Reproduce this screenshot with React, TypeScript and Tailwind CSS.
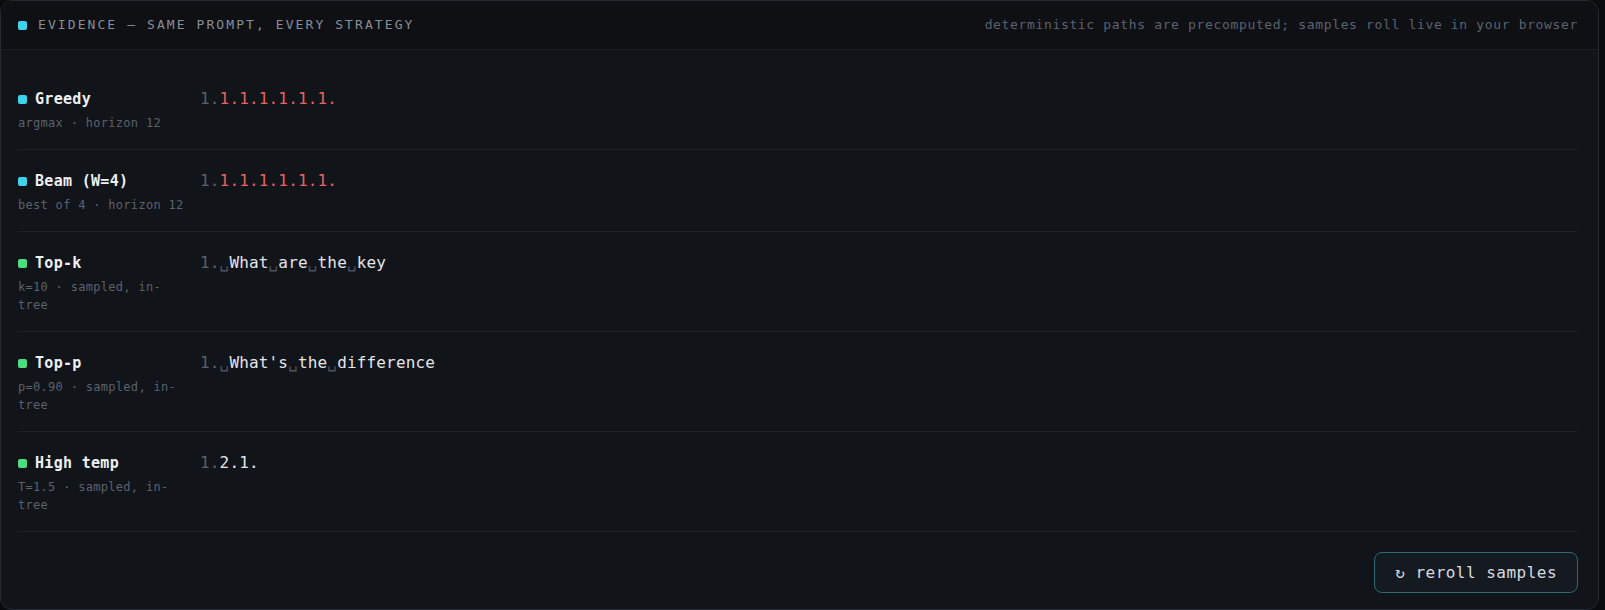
import React from "react";

type Seg = { text: string; tone: "red" | "text" | "space" };

type Row = {
  name: string;
  meta: string;
  dot: string;
  out: Seg[];
};

const sp: Seg = { text: "␣", tone: "space" };
const w = (text: string): Seg => ({ text, tone: "text" });

const rows: Row[] = [
  {
    name: "Greedy",
    meta: "argmax · horizon 12",
    dot: "bg-[#3fd2ec]",
    out: [{ text: "1.1.1.1.1.1.", tone: "red" }],
  },
  {
    name: "Beam (W=4)",
    meta: "best of 4 · horizon 12",
    dot: "bg-[#3fd2ec]",
    out: [{ text: "1.1.1.1.1.1.", tone: "red" }],
  },
  {
    name: "Top-k",
    meta: "k=10 · sampled, in-tree",
    dot: "bg-[#4ade80]",
    out: [sp, w("What"), sp, w("are"), sp, w("the"), sp, w("key")],
  },
  {
    name: "Top-p",
    meta: "p=0.90 · sampled, in-tree",
    dot: "bg-[#4ade80]",
    out: [sp, w("What's"), sp, w("the"), sp, w("difference")],
  },
  {
    name: "High temp",
    meta: "T=1.5 · sampled, in-tree",
    dot: "bg-[#4ade80]",
    out: [w("2.1.")],
  },
];

const toneClass = {
  red: "text-[#e8625e]",
  text: "text-[#e4e6ea]",
  space: "text-[#4d535d]",
};

function StrategyRow({ row }: { row: Row }) {
  return (
    <div className="flex items-start gap-3 border-b border-[#1d2026] pt-5 pb-[17px]">
      <div className="w-[170px] shrink-0">
        <div className="flex h-[22px] items-center gap-2">
          <span className={`h-[9px] w-[9px] rounded-[2px] ${row.dot}`} />
          <span className="text-[15px] leading-[22px] font-bold tracking-[0.02em] text-[#eef0f3]">
            {row.name}
          </span>
        </div>
        <p className="mt-1 text-[12px] leading-[18px] tracking-[0.025em] text-[#5b616c]">{row.meta}</p>
      </div>
      <div className="text-[16px] leading-[22px] tracking-[0.01em] whitespace-pre">
        <span className="text-[#59616c]">1.</span>
        {row.out.map((s, i) => (
          <span key={i} className={toneClass[s.tone]}>
            {s.text}
          </span>
        ))}
      </div>
    </div>
  );
}

export default function App() {
  return (
    <div
      className="min-h-screen bg-[#0a0b0d]"
      style={{ fontFamily: '"DejaVu Sans Mono", "Liberation Mono", monospace' }}
    >
      <div className="h-[610px] w-[1599px] overflow-hidden rounded-xl border border-[#252930] bg-[#111419]">
        <header className="flex h-[49px] items-center justify-between border-b border-[#1b1e24] bg-[#0e1014] pl-[17px] pr-5">
          <div className="flex items-center gap-[11px]">
            <span className="h-[9px] w-[9px] rounded-[2px] bg-[#3fd2ec]" />
            <span className="text-[13px] tracking-[0.16em] text-[#878e99]">
              EVIDENCE — SAME PROMPT, EVERY STRATEGY
            </span>
          </div>
          <span className="text-[13px] tracking-[0.05em] text-[#5c636e]">
            deterministic paths are precomputed; samples roll live in your browser
          </span>
        </header>

        <div className="pt-[18px] pl-[17px] pr-5">
          {rows.map((r) => (
            <StrategyRow key={r.name} row={r} />
          ))}

          <div className="mt-5 flex justify-end">
            <button className="h-[41px] rounded-lg border border-[#2a6b78] bg-[#151a21] px-5 text-[16px] tracking-[0.03em] text-[#d6dae0]">
              ↻ reroll samples
            </button>
          </div>
        </div>
      </div>
    </div>
  );
}
